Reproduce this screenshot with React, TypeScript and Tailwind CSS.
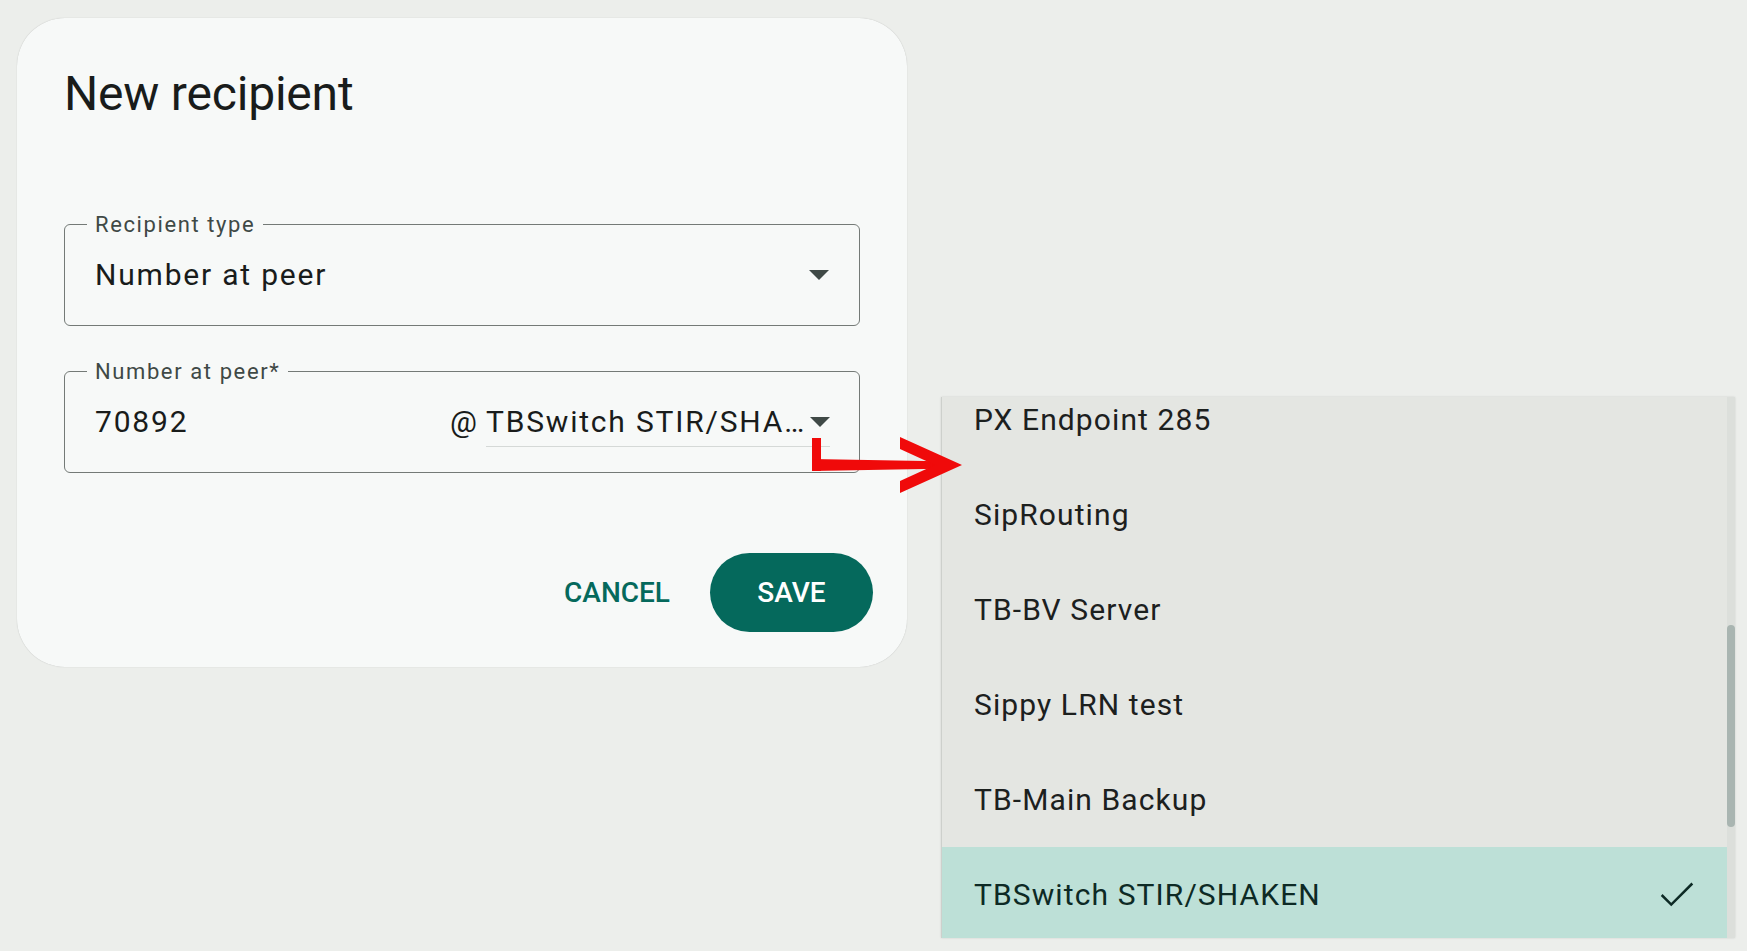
const peers = [
  "PX Endpoint 285",
  "SipRouting",
  "TB-BV Server",
  "Sippy LRN test",
  "TB-Main Backup",
  "TBSwitch STIR/SHAKEN",
]

const Caret = () => (
  <svg width="20" height="10" viewBox="0 0 20 10" className="shrink-0">
    <polygon points="0,0 20,0 10,10" fill="#3f4946" />
  </svg>
)

const OutlinedField = ({ label, children }: { label: string; children: React.ReactNode }) => (
  <div className="relative flex h-[102px] items-center rounded-[6px] border border-[#747a77] pl-[30px] pr-[30px]">
    <span className="absolute -top-[11px] left-[22px] bg-[#f7f9f8] px-[8px] text-[22px] leading-[22px] tracking-[1.6px] text-[#3f4946]">
      {label}
    </span>
    {children}
  </div>
)

export default function App() {
  return (
    <div className="relative h-[951px] w-full overflow-hidden bg-[#eceeeb] pl-[17px] pt-[18px] font-['Roboto',sans-serif]">
      <div className="flex h-[649px] w-[890px] flex-col rounded-[48px] bg-[#f7f9f8] px-[47px] pt-[48px] shadow-[0_0_1px_rgba(0,0,0,0.25)]">
        <h1 className="h-[56px] text-[48px] leading-[56px] tracking-[-0.2px] text-[#191c1b]">New recipient</h1>

        <div className="mt-[102px]">
          <OutlinedField label="Recipient type">
            <span className="flex-1 text-[30px] leading-[36px] tracking-[1.8px] text-[#191c1b]">Number at peer</span>
            <Caret />
          </OutlinedField>
        </div>

        <div className="mt-[45px]">
          <OutlinedField label="Number at peer*">
            <span className="flex-1 text-[30px] leading-[36px] tracking-[1.8px] text-[#191c1b]">70892</span>
            <span className="mr-[9px] text-[30px] leading-[36px] text-[#191c1b]">@</span>
            <div className="-mr-[1px] mt-[7px] flex w-[344px] items-center border-b border-[#d5d9d7] pb-[6px]">
              <span className="w-[322px] truncate text-[30px] leading-[36px] tracking-[1.8px] text-[#191c1b]">
                TBSwitch STIR/SHAKEN
              </span>
              <span className="ml-[2px]">
                <Caret />
              </span>
            </div>
          </OutlinedField>
        </div>

        <div className="-mr-[13px] mt-[80px] flex items-center justify-end gap-[40px]">
          <button className="text-[28px] font-medium leading-[32px] text-[#05695c]">CANCEL</button>
          <button className="h-[79px] w-[163px] rounded-full bg-[#05695c] text-[28px] font-medium text-white">
            SAVE
          </button>
        </div>
      </div>

      {/* open peer menu */}
      <div className="absolute left-[941px] top-[397px] flex h-[541px] w-[794px] overflow-hidden border-l border-[#cdd0cc] bg-[#e4e6e2] shadow-[0_0_2px_rgba(0,0,0,0.12)]">
        <div className="flex-1 overflow-hidden">
          <ul className="-mt-[25px]">
            {peers.map((p) => {
              const selected = p === "TBSwitch STIR/SHAKEN"
              return (
                <li
                  key={p}
                  className={
                    selected
                      ? "flex h-[95px] items-center justify-between bg-[#bde0d7] pl-[32px] pr-[27px] text-[30px] tracking-[1.1px] text-[#0d2a25]"
                      : "flex h-[95px] items-center pl-[32px] text-[30px] tracking-[1.1px] text-[#1c201e]"
                  }
                >
                  <span>{p}</span>
                  {selected && (
                    <svg width="46" height="46" viewBox="0 0 24 24" fill="none" stroke="#0d2a25" strokeWidth="1.3">
                      <polyline points="4 12 9 17 20 6" />
                    </svg>
                  )}
                </li>
              )
            })}
          </ul>
        </div>
        <div className="flex w-[8px] flex-col bg-[#dcdfdb]">
          <div className="mt-[228px] h-[202px] rounded-full bg-[#a9b5b1]" />
        </div>
      </div>

      {/* red annotation arrow */}
      <svg className="absolute left-[800px] top-[430px]" width="170" height="70" viewBox="0 0 170 70">
        <rect x="12" y="8" width="9" height="33" fill="#f00a0a" />
        <polygon points="12,29 152,31.5 152,38.5 12,41" fill="#f00a0a" />
        <polygon points="100,7 162,35 100,63 100,51 135,35 100,19" fill="#f00a0a" />
      </svg>
    </div>
  )
}
